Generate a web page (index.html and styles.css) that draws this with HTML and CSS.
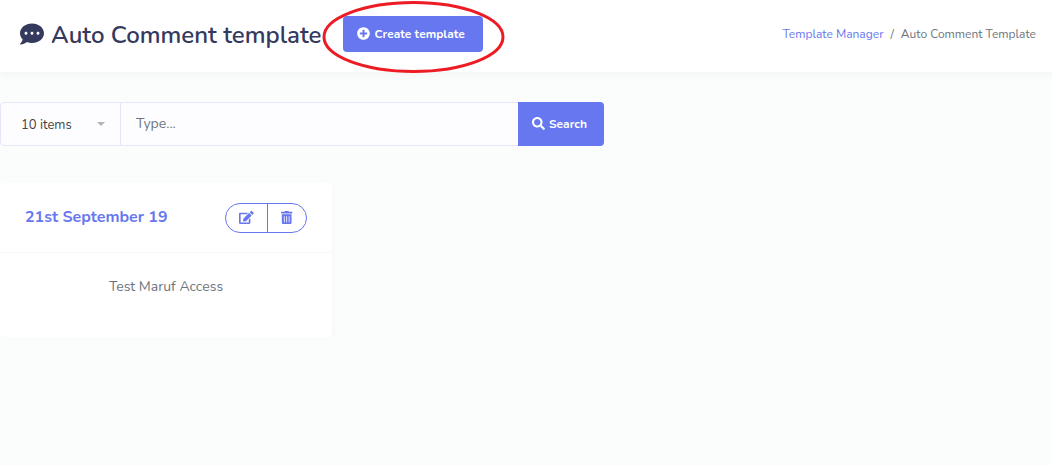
FILE: index.html
```html
<!DOCTYPE html>
<html lang="en">
<head>
<meta charset="utf-8">
<meta name="viewport" content="width=device-width, initial-scale=1">
<title>Auto Comment Template</title>
<link rel="stylesheet" href="styles.css">
</head>
<body>
<header class="section-header">
  <h1 class="title">
    <svg class="title-icon" viewBox="0 0 512 512" aria-hidden="true"><path fill="currentColor" d="M256 32C114.6 32 0 125.1 0 240c0 49.6 21.4 95 57 130.7C44.5 421.1 2.7 466 2.2 466.5c-2.2 2.3-2.8 5.7-1.5 8.7S4.8 480 8 480c66.3 0 116-31.8 140.6-51.4 32.7 12.3 69 19.4 107.4 19.4 141.4 0 256-93.1 256-208S397.4 32 256 32zM128 272c-17.7 0-32-14.3-32-32s14.3-32 32-32 32 14.3 32 32-14.3 32-32 32zm128 0c-17.7 0-32-14.3-32-32s14.3-32 32-32 32 14.3 32 32-14.3 32-32 32zm128 0c-17.7 0-32-14.3-32-32s14.3-32 32-32 32 14.3 32 32-14.3 32-32 32z"/></svg>
    <span class="title-text">Auto Comment template</span>
  </h1>
  <div class="create">
    <button type="button" class="btn btn-create">
      <svg class="btn-icon" viewBox="0 0 512 512" aria-hidden="true"><path fill="currentColor" d="M256 8C119 8 8 119 8 256s111 248 248 248 248-111 248-248S393 8 256 8zm144 276c0 6.600-5.400 12-12 12h-92v92c0 6.600-5.400 12-12 12h-56c-6.600 0-12-5.400-12-12v-92h-92c-6.600 0-12-5.400-12-12v-56c0-6.600 5.400-12 12-12h92v-92c0-6.600 5.400-12 12-12h56c6.600 0 12 5.400 12 12v92h92c6.600 0 12 5.400 12 12v56z"/></svg>
      Create template
    </button>
    <svg class="highlight" viewBox="0 0 182 72" aria-hidden="true"><ellipse cx="91" cy="36" rx="89.500" ry="34.500" fill="none" stroke="#ed1c24" stroke-width="3"/></svg>
  </div>
  <nav class="breadcrumb" aria-label="Breadcrumb">
    <a href="#">Template Manager</a>
    <span>/</span>
    <span>Auto Comment Template</span>
  </nav>
</header>

<main>
  <form class="search">
    <select class="per-page" aria-label="Items per page"><option>10 items</option><option>25 items</option><option>50 items</option></select>
    <input class="query" type="text" placeholder="Type..." aria-label="Search templates">
    <button type="button" class="btn btn-search">
      <svg class="btn-icon" viewBox="0 0 512 512" aria-hidden="true"><path fill="currentColor" d="M505 442.700L405.300 343c-4.500-4.500-10.600-7-17-7H372c27.600-35.300 44-79.700 44-128C416 93.100 322.900 0 208 0S0 93.100 0 208s93.100 208 208 208c48.300 0 92.700-16.400 128-44v16.300c0 6.400 2.500 12.500 7 17l99.700 99.700c9.400 9.400 24.600 9.400 33.900 0l28.300-28.300c9.400-9.400 9.400-24.600.1-34zM208 336c-70.700 0-128-57.200-128-128 0-70.700 57.200-128 128-128 70.700 0 128 57.200 128 128 0 70.700-57.200 128-128 128z"/></svg>
      Search
    </button>
  </form>

  <div class="cards">
    <article class="card">
      <div class="card-header">
        <h2 class="card-title">21st September 19</h2>
        <div class="actions">
          <button type="button" class="action action-edit" aria-label="Edit"><svg class="action-icon" viewBox="0 0 576 512"><path fill="currentColor" d="M402.600 83.200l90.200 90.200c3.800 3.800 3.800 10 0 13.800L274.400 405.600l-92.800 10.300c-12.400 1.400-22.900-9.100-21.500-21.500l10.300-92.800L388.800 83.200c3.800-3.800 10-3.800 13.800 0zm162-22.900l-48.800-48.800c-15.200-15.200-39.900-15.200-55.200 0l-35.400 35.400c-3.800 3.800-3.800 10 0 13.800l90.200 90.200c3.800 3.800 10 3.800 13.800 0l35.400-35.400c15.200-15.300 15.200-40 0-55.200zM384 346.200V448H64V128h229.800c3.200 0 6.200-1.300 8.500-3.500l40-40c7.600-7.600 2.200-20.500-8.500-20.500H48C21.500 64 0 85.500 0 112v352c0 26.500 21.500 48 48 48h352c26.500 0 48-21.500 48-48V306.200c0-10.700-12.900-16-20.500-8.500l-40 40c-2.200 2.300-3.500 5.300-3.500 8.500z"/></svg></button>
          <button type="button" class="action action-delete" aria-label="Delete"><svg class="action-icon" viewBox="0 0 448 512"><path fill="currentColor" d="M32 464a48 48 0 0 0 48 48h288a48 48 0 0 0 48-48V128H32zm272-256a16 16 0 0 1 32 0v224a16 16 0 0 1-32 0zm-96 0a16 16 0 0 1 32 0v224a16 16 0 0 1-32 0zm-96 0a16 16 0 0 1 32 0v224a16 16 0 0 1-32 0zM432 32H312l-9.400-18.700A24 24 0 0 0 281.100 0H166.800a23.700 23.700 0 0 0-21.400 13.300L136 32H16A16 16 0 0 0 0 48v32a16 16 0 0 0 16 16h416a16 16 0 0 0 16-16V48a16 16 0 0 0-16-16z"/></svg></button>
        </div>
      </div>
      <p class="card-body">Test Maruf Access</p>
    </article>
  </div>
</main>
</body>
</html>
```
FILE: styles.css
```css
* { box-sizing: border-box; }

body {
  margin: 0;
  background: #fbfdfc;
  color: #6c757d;
  font: 14px/24px Nunito, "Open Sans", sans-serif;
}

button, input, select { font-family: inherit; margin: 0; }

.section-header {
  display: flex;
  align-items: center;
  min-height: 72px;
  padding: 0 16px 4px 20px;
  background: #fff;
  border-radius: 3px;
  box-shadow: 0 4px 8px rgba(0, 0, 0, 0.03);
}

.title {
  display: flex;
  align-items: center;
  gap: 7px;
  margin: 2px 22px 0 0;
  color: #34395e;
  font-size: 24px;
  font-weight: 600;
  line-height: 28px;
  white-space: nowrap;
}

.title-icon { width: 24px; height: 24px; margin-bottom: 2px; }

.create { position: relative; }

.highlight {
  position: absolute;
  left: -21px;
  top: -15px;
  width: 183px;
  height: 72px;
  pointer-events: none;
}

.btn {
  display: flex;
  align-items: center;
  gap: 4px;
  padding: 0 14px;
  border: 0;
  background: #6777ef;
  color: #fff;
  font-size: 12px;
  font-weight: 700;
  line-height: 24px;
  white-space: nowrap;
  cursor: pointer;
}

.btn-icon { width: 13px; height: 13px; margin-bottom: 2px; }

.btn-create { height: 36px; padding-right: 18px; border-radius: 4px; }

.breadcrumb {
  display: flex;
  gap: 7px;
  margin-left: auto;
  font-size: 12px;
  white-space: nowrap;
}

.breadcrumb a { color: #6777ef; text-decoration: none; }

.search {
  display: flex;
  max-width: 604px;
  height: 44px;
  margin-top: 30px;
}

.per-page {
  width: 121px;
  padding: 2px 20px 0;
  border: 1px solid #e4e6fc;
  border-radius: 4px 0 0 4px;
  appearance: none;
  background: #fdfdff url("data:image/svg+xml,%3Csvg xmlns='http://www.w3.org/2000/svg' width='8' height='4'%3E%3Cpath d='M0 0h8L4 4z' fill='%23b4b4b4'/%3E%3C/svg%3E") no-repeat right 15px center;
  color: #444;
  font-size: 13px;
}

.query {
  flex: 1;
  min-width: 0;
  padding: 0 15px 2px;
  border: 1px solid #e4e6fc;
  border-width: 1px 0;
  background: #fdfdff;
  color: #495057;
  font-size: 14px;
}

.query::placeholder { color: #6c757d; opacity: 1; }

.btn-search { width: 86px; border-radius: 0 4px 4px 0; }

.cards {
  display: grid;
  grid-template-columns: repeat(auto-fill, minmax(300px, 332px));
  gap: 28px;
  margin-top: 37px;
}

.card {
  background: #fff;
  border-radius: 3px;
  box-shadow: 0 4px 8px rgba(0, 0, 0, 0.03);
}

.card-header {
  display: flex;
  align-items: center;
  justify-content: space-between;
  min-height: 70px;
  padding: 0 25px;
  border-bottom: 1px solid #f9f9f9;
}

.card-title { margin: 0 0 2px; color: #6777ef; font-size: 16px; font-weight: 700; line-height: 28px; }

.actions { display: flex; }

.action {
  display: flex;
  align-items: center;
  justify-content: center;
  height: 30px;
  padding: 0 13px;
  border: 1px solid #6777ef;
  background: transparent;
  color: #6777ef;
  cursor: pointer;
}

.action-edit { width: 43px; border-radius: 15px 0 0 15px; }
.action-delete { width: 40px; margin-left: -1px; border-radius: 0 15px 15px 0; }
.action-icon { height: 13px; flex: none; }

.card-body { margin: 0; padding: 22px 25px 38px; text-align: center; }
```
